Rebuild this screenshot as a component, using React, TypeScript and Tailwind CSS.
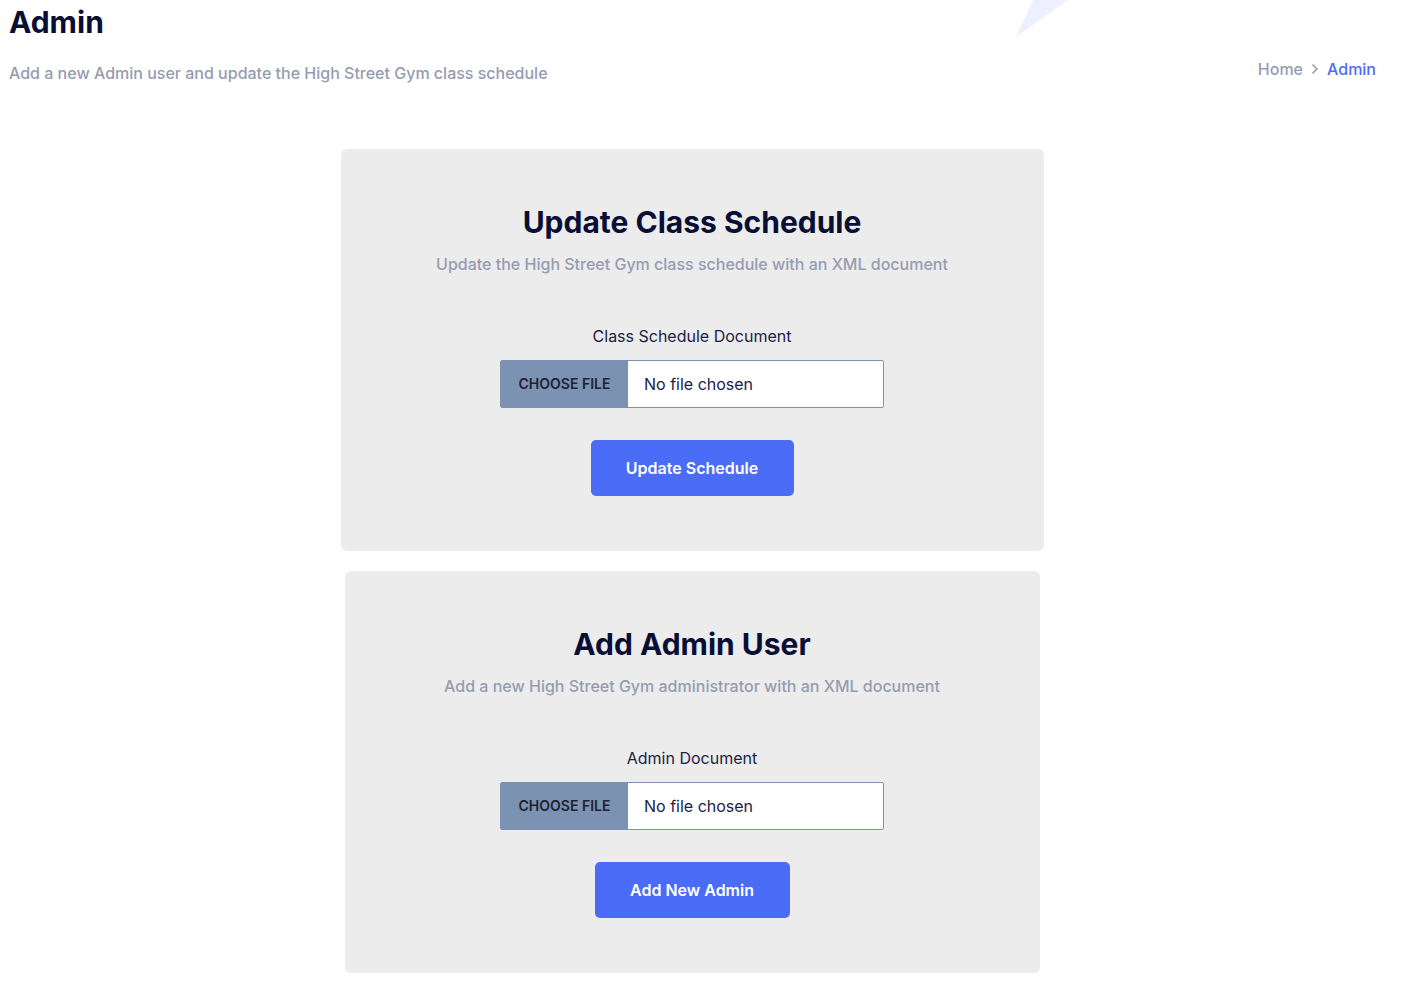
import { ChevronRight } from "lucide-react"

interface UploadCardProps {
  title: string
  description: string
  label: string
  action: string
  width: string
  buttonWidth: string
}

function UploadCard({ title, description, label, action, width, buttonWidth }: UploadCardProps) {
  return (
    <div className={`${width} rounded-[6px] bg-[#ececec] pt-[55px] pb-[55px] flex flex-col items-center`}>
      <h2 className="text-[30px] leading-[36px] font-bold text-[#090e34]">{title}</h2>
      <p className="mt-[12px] text-base leading-[24px] font-medium text-[#959cb1]">{description}</p>

      {/* Upload field */}
      <label className="mt-[48px] text-base leading-[24px] text-[#1d2144]">{label}</label>
      <div className="mt-[12px] flex h-[48px] w-[384px] overflow-hidden rounded-[2px] border border-[#7b92b2] bg-white">
        <span className="flex w-[127px] shrink-0 items-center justify-center bg-[#7b92b2] text-sm font-semibold uppercase text-[#1e2233]">
          Choose file
        </span>
        <span className="flex items-center pl-[16px] text-base text-[#1d2144]">No file chosen</span>
      </div>

      <button
        className={`mt-[32px] h-[56px] ${buttonWidth} rounded-[5px] bg-[#4a6cf7] text-base font-semibold text-white`}
      >
        {action}
      </button>
    </div>
  )
}

export default function App() {
  return (
    <div className="relative min-h-screen bg-white font-['Inter','Liberation_Sans',sans-serif]">
      {/* Decoration */}
      <svg className="absolute left-[1010px] top-0" width="64" height="40" viewBox="0 0 64 40">
        <polygon points="23,0 58,0 6,37" fill="#edf0fe" />
      </svg>

      {/* Header */}
      <div className="relative flex items-end justify-between pt-[4px] pl-[9px] pr-[48px]">
        <div>
          <h1 className="text-[30px] leading-[44px] -mt-[4px] font-bold text-[#090e34]">Admin</h1>
          <p className="mt-[17px] text-base leading-[24px] font-medium text-[#959cb1]">
            Add a new Admin user and update the High Street Gym class schedule
          </p>
        </div>
        <div className="mb-[4px] flex items-center gap-[4px] text-base font-medium leading-[24px]">
          <span className="text-[#959cb1]">Home</span>
          <ChevronRight size={16} strokeWidth={2.5} className="text-[#959cb1]" />
          <span className="text-[#4a6cf7]">Admin</span>
        </div>
      </div>

      {/* Cards */}
      <div className="mt-[64px] flex flex-col items-center gap-[20px] pb-[12px] pr-[39px]">
        <div className="pr-[1px]">
          <UploadCard
            title="Update Class Schedule"
            description="Update the High Street Gym class schedule with an XML document"
            label="Class Schedule Document"
            action="Update Schedule"
            width="w-[703px]"
            buttonWidth="w-[203px]"
          />
        </div>
        <div className="pr-[1px]">
          <UploadCard
            title="Add Admin User"
            description="Add a new High Street Gym administrator with an XML document"
            label="Admin Document"
            action="Add New Admin"
            width="w-[695px]"
            buttonWidth="w-[195px]"
          />
        </div>
      </div>
    </div>
  )
}
